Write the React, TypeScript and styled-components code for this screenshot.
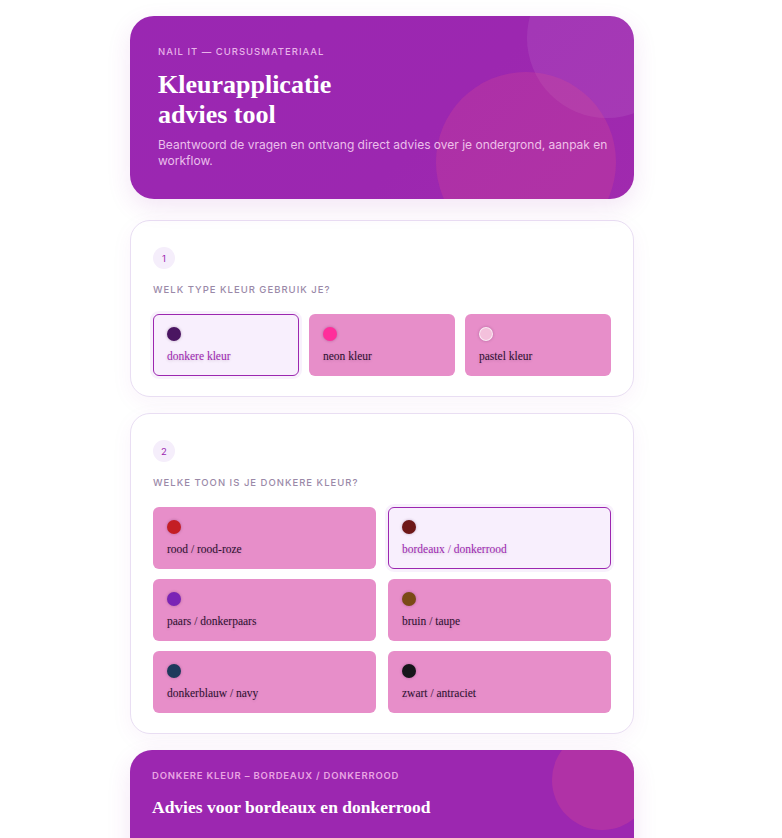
import React from 'react'
import styled, { createGlobalStyle } from 'styled-components'

const GlobalStyle = createGlobalStyle`
  * { box-sizing: border-box; }
  body {
    margin: 0;
    padding-right: 18px;
    background: #ffffff;
    font-family: Inter, "Open Sans", sans-serif;
  }
`

const Page = styled.div`
  width: 504px;
  margin: 0 auto;
  padding: 16px 0 40px;
  display: flex;
  flex-direction: column;
`

const Hero = styled.header`
  position: relative;
  overflow: hidden;
  border-radius: 24px;
  padding: 30px 18px 30px 28px;
  margin-bottom: 21px;
  background: linear-gradient(135deg, #9a27b2 0%, #9c27b0 60%, #a02aae 100%);
  box-shadow: 0 8px 24px rgba(156, 39, 176, 0.12);
  color: #fff;

  .content {
    position: relative;
    z-index: 1;
  }
`

const Bubble = styled.span<{ $size: number; $top: number; $right: number; $tint: string }>`
  position: absolute;
  width: ${p => p.$size}px;
  height: ${p => p.$size}px;
  top: ${p => p.$top}px;
  right: ${p => p.$right}px;
  border-radius: 50%;
  background: ${p => p.$tint};
`

const Eyebrow = styled.div`
  font-size: 9.5px;
  font-weight: 500;
  letter-spacing: 1px;
  text-transform: uppercase;
  color: rgba(255, 220, 250, 0.78);
`

const Title = styled.h1`
  margin: 13px 0 7px;
  font-family: "Liberation Serif", "DejaVu Serif", serif;
  font-weight: 700;
  font-size: 26px;
  line-height: 30px;
  color: #fff;
`

const Lead = styled.p`
  margin: 0;
  font-size: 12px;
  line-height: 16px;
  color: rgba(255, 225, 250, 0.82);
`

const Card = styled.section`
  border: 1px solid #e9def3;
  border-radius: 20px;
  background: #fff;
  padding: 26px 22px 20px;
  margin-bottom: 16px;
  box-shadow: 0 6px 22px rgba(156, 39, 176, 0.05);
`

const Step = styled.div`
  width: 22px;
  height: 22px;
  border-radius: 50%;
  background: #f5eefb;
  color: #9c27b0;
  font-size: 9.5px;
  display: flex;
  align-items: center;
  justify-content: center;
`

const Question = styled.h3`
  margin: 15px 0 18px;
  font-size: 9.5px;
  font-weight: 500;
  letter-spacing: 1px;
  line-height: 12px;
  text-transform: uppercase;
  color: #9a89a8;
`

const Options = styled.div<{ $cols: number }>`
  display: grid;
  grid-template-columns: repeat(${p => p.$cols}, 1fr);
  column-gap: ${p => (p.$cols === 3 ? 10 : 12)}px;
  row-gap: 10px;
`

const Option = styled.button<{ $active?: boolean }>`
  display: flex;
  flex-direction: column;
  align-items: flex-start;
  gap: 8px;
  height: 62px;
  padding: 12px 13px;
  border-radius: 6px;
  border: 1.5px solid ${p => (p.$active ? '#9c27b0' : 'transparent')};
  background: ${p => (p.$active ? '#f8effd' : '#e78ec9')};
  box-shadow: ${p => (p.$active ? '0 0 0 3px rgba(200, 140, 230, 0.12)' : 'none')};
  font-family: "Liberation Serif", "Times New Roman", serif;
  font-size: 11.5px;
  line-height: 14px;
  color: ${p => (p.$active ? '#9c27b0' : '#2b0f2e')};
  text-shadow: 0 1px 3px rgba(60, 0, 60, 0.18);
  text-align: left;
  cursor: pointer;
`

const Dot = styled.span<{ $color: string; $ring?: boolean }>`
  width: 14px;
  height: 14px;
  border-radius: 50%;
  background: ${p => p.$color};
  border: ${p => (p.$ring ? '1px solid rgba(255,255,255,0.7)' : 'none')};
  box-shadow: 0 0 3px rgba(60, 0, 60, 0.3);
`

const Result = styled.section`
  position: relative;
  overflow: hidden;
  border-radius: 22px;
  background: #9c27b0;
  padding: 20px 22px 60px;
  color: #fff;
  box-shadow: 0 8px 24px rgba(156, 39, 176, 0.12);

  .content {
    position: relative;
    z-index: 1;
  }

  h2 {
    margin: 14px 0 0;
    font-family: "Liberation Serif", "DejaVu Serif", serif;
    font-weight: 700;
    font-size: 17.5px;
    line-height: 24px;
  }
`

const ResultTag = styled.div`
  font-size: 9.5px;
  font-weight: 600;
  letter-spacing: 0.8px;
  text-transform: uppercase;
  color: rgba(255, 200, 240, 0.8);
`

const types = [
  { label: 'donkere kleur', color: '#4a1561', active: true },
  { label: 'neon kleur', color: '#ff2d9b' },
  { label: 'pastel kleur', color: '#f4c1dc', ring: true },
]

const tones = [
  { label: 'rood / rood-roze', color: '#c41e24' },
  { label: 'bordeaux / donkerrood', color: '#6e1818', active: true },
  { label: 'paars / donkerpaars', color: '#7a24b5' },
  { label: 'bruin / taupe', color: '#7a4a16' },
  { label: 'donkerblauw / navy', color: '#1d3a5c' },
  { label: 'zwart / antraciet', color: '#16161a' },
]

const App: React.FC = () => {
  return (
    <>
      <GlobalStyle />
      <Page>
        <Hero>
          <Bubble $size={160} $top={-58} $right={-53} $tint="rgba(255, 255, 255, 0.08)" />
          <Bubble $size={180} $top={56} $right={18} $tint="rgba(230, 80, 140, 0.24)" />
          <div className="content">
            <Eyebrow>Nail it — cursusmateriaal</Eyebrow>
            <Title>
              Kleurapplicatie
              <br />
              advies tool
            </Title>
            <Lead>
              Beantwoord de vragen en ontvang direct advies over je ondergrond, aanpak en workflow.
            </Lead>
          </div>
        </Hero>

        <Card>
          <Step>1</Step>
          <Question>Welk type kleur gebruik je?</Question>
          <Options $cols={3}>
            {types.map(t => (
              <Option key={t.label} $active={t.active}>
                <Dot $color={t.color} $ring={t.ring} />
                {t.label}
              </Option>
            ))}
          </Options>
        </Card>

        <Card>
          <Step>2</Step>
          <Question>Welke toon is je donkere kleur?</Question>
          <Options $cols={2}>
            {tones.map(t => (
              <Option key={t.label} $active={t.active}>
                <Dot $color={t.color} />
                {t.label}
              </Option>
            ))}
          </Options>
        </Card>

        <Result>
          <Bubble $size={100} $top={-20} $right={-18} $tint="rgba(230, 80, 140, 0.28)" />
          <div className="content">
            <ResultTag>Donkere kleur – bordeaux / donkerrood</ResultTag>
            <h2>Advies voor bordeaux en donkerrood</h2>
          </div>
        </Result>
      </Page>
    </>
  )
}

export default App
